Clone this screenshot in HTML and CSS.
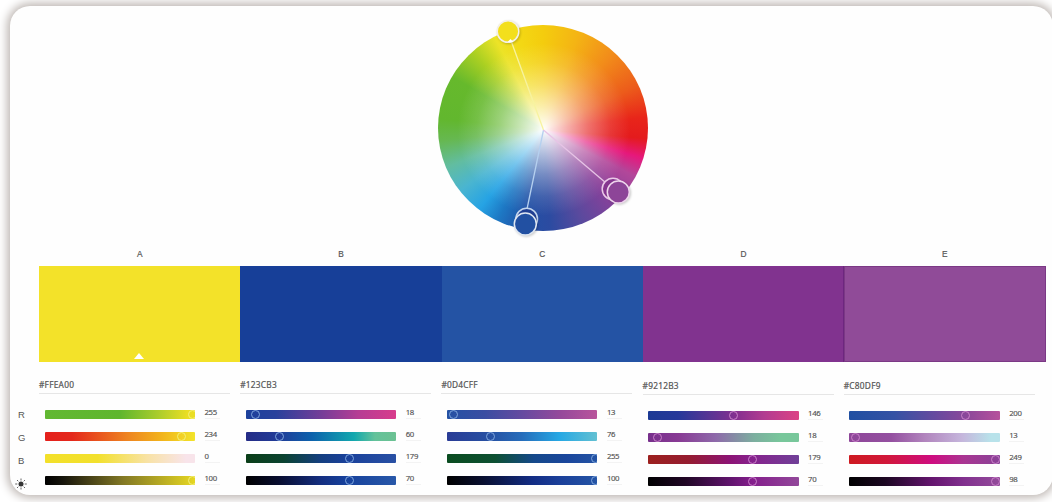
FILE: index.html
```html
<!DOCTYPE html>
<html lang="en">
<head>
    <meta charset="utf-8">
    <title>Color wheel</title>
    <link rel="stylesheet" href="styles.css">
</head>
<body>
    <div class="card">
        <div class="wheel">
            <svg class="handles" viewBox="0 0 210 206">
                <line x1="105.5" y1="105" x2="73.5" y2="17" stroke="#f7f3a0" stroke-width="1.3" />
                <line x1="105.5" y1="105" x2="89" y2="184" stroke="#b5d0ef" stroke-width="1.3" />
                <line x1="105.5" y1="105" x2="168" y2="158" stroke="#e7c4e6" stroke-width="1.3" />
                <g stroke="#f4f0e6" stroke-width="1.5">
                    <circle class="knob" cx="70" cy="6.5" r="10.8" fill="#f3df1c" />
                    <circle cx="88.7" cy="194" r="10.8" fill="#203f94" stroke="#c2d5ed" />
                    <circle class="knob" cx="87.3" cy="199" r="11" fill="#2250a2" stroke="#dfe7f2" />
                    <circle cx="175" cy="164" r="10.8" fill="#85368f" stroke="#ebcae8" />
                    <circle class="knob" cx="180.3" cy="167" r="11" fill="#8d4598" stroke="#efd6ed" />
                </g>
                <path d="M69.5 17l3-3 3 3z" fill="#fff" />
            </svg>
        </div>

        <div class="letters">
            <span>A</span>
            <span>B</span>
            <span>C</span>
            <span>D</span>
            <span>E</span>
        </div>

        <div class="swatches">
            <div class="swatch yellow"><span class="base"></span></div>
            <div class="swatch navy"></div>
            <div class="swatch blue"></div>
            <div class="swatch purple"></div>
            <div class="swatch violet"></div>
        </div>

        <div class="controls">
            <div class="channels">
                <span>R</span>
                <span>G</span>
                <span>B</span>
                <svg viewBox="0 0 12 12">
                    <circle cx="6" cy="6" r="2.5" fill="#333" />
                    <path d="M6 .5v2M6 9.5v2M.2 6h2.1M9.7 6h2.1M2 2l1.3 1.3M8.7 8.7L10 10M10 2L8.7 3.3M3.3 8.7L2 10" stroke="#555" stroke-width=".9" />
                </svg>
            </div>

            <div class="color">
                <div class="hex">#FFEA00</div>
                <div class="row"><div class="bar a-r"><i class="pale" style="left: 148px"></i></div><span>255</span></div>
                <div class="row"><div class="bar a-g"><i class="pale" style="left: 137px"></i></div><span>234</span></div>
                <div class="row"><div class="bar a-b"></div><span>0</span></div>
                <div class="row"><div class="bar a-l"><i class="pale" style="left: 148px"></i></div><span>100</span></div>
            </div>

            <div class="color">
                <div class="hex">#123CB3</div>
                <div class="row"><div class="bar b-r"><i style="left: 10px"></i></div><span>18</span></div>
                <div class="row"><div class="bar b-g"><i style="left: 34px"></i></div><span>60</span></div>
                <div class="row"><div class="bar b-b"><i style="left: 104px"></i></div><span>179</span></div>
                <div class="row"><div class="bar b-l"><i style="left: 103.5px"></i></div><span>70</span></div>
            </div>

            <div class="color">
                <div class="hex">#0D4CFF</div>
                <div class="row"><div class="bar c-r"><i style="left: 6.5px"></i></div><span>13</span></div>
                <div class="row"><div class="bar c-g"><i style="left: 43.5px"></i></div><span>76</span></div>
                <div class="row"><div class="bar c-b"><i style="left: 149px"></i></div><span>255</span></div>
                <div class="row"><div class="bar c-l"><i style="left: 149px"></i></div><span>100</span></div>
            </div>

            <div class="color low">
                <div class="hex">#9212B3</div>
                <div class="row"><div class="bar d-r"><i class="pink" style="left: 85px"></i></div><span>146</span></div>
                <div class="row"><div class="bar d-g"><i class="pink" style="left: 9.5px"></i></div><span>18</span></div>
                <div class="row"><div class="bar d-b"><i class="pink" style="left: 104px"></i></div><span>179</span></div>
                <div class="row"><div class="bar d-l"><i class="pink" style="left: 104px"></i></div><span>70</span></div>
            </div>

            <div class="color low">
                <div class="hex">#C80DF9</div>
                <div class="row"><div class="bar e-r"><i class="pink" style="left: 116px"></i></div><span>200</span></div>
                <div class="row"><div class="bar e-g"><i class="pink" style="left: 6.5px"></i></div><span>13</span></div>
                <div class="row"><div class="bar e-b"><i class="pink" style="left: 146px"></i></div><span>249</span></div>
                <div class="row"><div class="bar e-l"><i class="pink" style="left: 146px"></i></div><span>98</span></div>
            </div>
        </div>
    </div>
</body>
</html>
```
FILE: styles.css
```css
* {
    box-sizing: border-box;
}

body {
    margin: 0;
    height: 502px;
    padding: 6px 0 0 10px;
    overflow: hidden;
    background: #fff;
    font-family: "Noto Sans", sans-serif;
    color: #555;
}

.card {
    width: 1043px;
    height: 489px;
    padding: 19px 0 0 29px;
    border-radius: 20px;
    background: #fefefe;
    box-shadow: 0 0 10px 3px #bdb6b2;
}

.wheel {
    width: 210px;
    height: 206px;
    margin-left: 398.5px;
    border-radius: 50%;
    background:
        radial-gradient(circle at 50.3% 50.8%, #fff 0, rgba(255, 255, 255, .88) 5%, rgba(255, 255, 255, .64) 16%, rgba(255, 255, 255, .36) 30%, rgba(255, 255, 255, .12) 45%, rgba(255, 255, 255, 0) 58%),
        conic-gradient(at 50.3% 50.8%, #f4cc0e 0deg, #f4b414 20deg, #f28c1a 42deg, #ec5b1b 65deg, #e8251a 83deg, #e41b1d 95deg, #e6187c 106deg, #b2479a 117deg, #86419a 136deg, #584a9e 158deg, #2c4ba1 176deg, #2150a5 192deg, #1d78c4 207deg, #26a3e4 219deg, #4ab5d0 234deg, #62bda0 249deg, #66b850 264deg, #62b72e 276deg, #66b92c 300deg, #acd022 318deg, #ece327 332deg, #f3d814 345deg, #f4cc0e 360deg);
}

.handles {
    display: block;
    width: 210px;
    height: 206px;
    overflow: visible;
}

.knob {
    filter: drop-shadow(1px 1px 1px rgba(0, 0, 0, .2));
}

.letters,
.swatches {
    display: grid;
    grid-template-columns: repeat(5, 1fr);
    width: 1006.5px;
}

.letters {
    height: 34.5px;
    padding-top: 17px;
    font: 8.3px/12px "Liberation Sans", sans-serif;
    text-align: center;
    -webkit-text-stroke: .2px;
}

.swatches {
    height: 96px;
}

.swatch {
    position: relative;
}

.yellow { background: #f3e229; }
.navy { background: #173f98; }
.blue { background: #2453a4; }
.purple { background: #81338f; border-right: 1px solid #6d267f; }
.violet { background: #904b98; border: 1px solid #7b3985; }

/* marks the base color */
.base {
    position: absolute;
    left: 95px;
    bottom: 3px;
    border: 5.5px solid transparent;
    border-top: 0;
    border-bottom: 6px solid #fff;
}

.controls {
    display: flex;
    margin-left: -21px;
}

.channels {
    display: flex;
    flex-direction: column;
    width: 21px;
    padding-top: 41.5px;
    font: 9.5px/23px "Liberation Sans", sans-serif;
}

.channels svg {
    width: 12px;
    height: 12px;
    margin: 5.5px 0 0 -3px;
}

.color {
    width: 201.2px;
    padding-top: 16px;
}

.hex {
    width: 191px;
    height: 16px;
    margin-bottom: 10px;
    border-bottom: 1px solid #e6e6e6;
    font-size: 8.3px;
    line-height: 14px;
    letter-spacing: .25px;
    -webkit-text-stroke: .2px;
}

.row {
    display: flex;
    align-items: center;
    height: 22.1px;
    padding-left: 5.5px;
}

.row span {
    width: 15px;
    margin: -3px 0 0 9.5px;
    font-size: 7.8px;
    line-height: 11px;
    letter-spacing: -.35px;
    border-bottom: 1px solid #f3f3f3;
    -webkit-text-stroke: .15px;
}

.low .hex {
    height: 17px;
    line-height: 16px;
}

.low .row {
    height: 21.9px;
}

.bar {
    position: relative;
    width: 150.5px;
    height: 9px;
    border-radius: 1px;
    overflow: hidden;
}

/* slider thumb */
.bar i {
    position: absolute;
    top: 0;
    width: 9px;
    height: 9px;
    margin-left: -4.5px;
    border: 1px solid #7ea6dc;
    border-radius: 50%;
}

.bar .pale { border-color: #f3ef7a; }
.bar .pink { border-color: #c982c8; }

.a-r { background: linear-gradient(90deg, #62b832, #5fb62e 50%, #a9cc2c 75%, #eade24 95%); }
.a-g { background: linear-gradient(90deg, #e4201c, #e4281c 18%, #ee8420 55%, #f2b41c 78%, #f2e42a); }
.a-b { background: linear-gradient(90deg, #f3e02a, #f2e02c 35%, #f8e2a4 68%, #f8e4ea 94%); }
.a-l { background: linear-gradient(90deg, #000, #17150c 12%, #827824 52%, #e6d722); }

.b-r { background: linear-gradient(90deg, #1c419c, #29419c 20%, #743d98 50%, #b63d94 75%, #d83c8c); }
.b-g { background: linear-gradient(90deg, #252c86, #213c98 22%, #0c62ac 44%, #12a8ae 72%, #64c29a 86%, #6bc192); }
.b-b { background: linear-gradient(90deg, #0a3e18, #0b4330 25%, #143e80 50%, #19409a 67%, #2850a4); }
.b-l { background: linear-gradient(90deg, #000, #080d30 22%, #142e80 50%, #16409b 66%, #2858a9); }

.c-r { background: linear-gradient(90deg, #2452a4, #3a4da2 25%, #654aa0 50%, #94499b 75%, #b9559c); }
.c-g { background: linear-gradient(90deg, #2a3c96, #2750a2 28%, #266dbb 50%, #26a8e4 75%, #62c0d2); }
.c-b { background: linear-gradient(90deg, #0a4c20, #0d5032 32%, #14488a 58%, #1a469c 80%, #2453a4); }
.c-l { background: linear-gradient(90deg, #000, #090f30 24%, #122c84 57%, #1b3f99 75%, #2454a5); }

.d-r { background: linear-gradient(90deg, #1c3a94, #26389a 20%, #563594 40%, #842f90 58%, #b23c91 77%, #dc4284); }
.d-g { background: linear-gradient(90deg, #77308c, #883a94 20%, #8e6aaa 45%, #7cae9f 70%, #78c79b 88%); }
.d-b { background: linear-gradient(90deg, #9c201e, #951c30 27%, #8c1374 54%, #86218c 68%, #704098); }
.d-l { background: linear-gradient(90deg, #000, #200625 25%, #5f136c 54%, #841e8c 69%, #92489a); }

.e-r { background: linear-gradient(90deg, #2050a2, #3552a4 30%, #664a9f 57%, #8c479a 78%, #b6519c); }
.e-g { background: linear-gradient(90deg, #8e4699, #9450a0 28%, #b184bd 50%, #c5b6dc 75%, #b8e2ea 94%); }
.e-b { background: linear-gradient(90deg, #ce1a20, #d1173a 25%, #ce0c80 55%, #a93592 76%, #884297); }
.e-l { background: linear-gradient(90deg, #000, #1c0722 24%, #64146e 55%, #81308e 76%, #944b9b); }
```
